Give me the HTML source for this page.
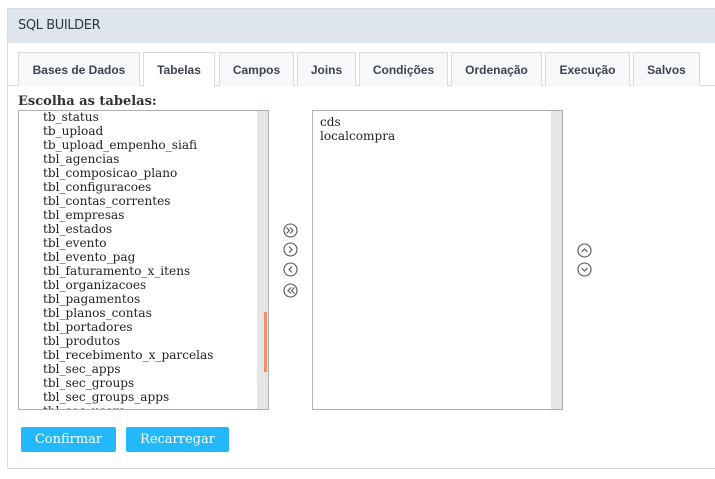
<!DOCTYPE html>
<html><head><meta charset="utf-8"><style>
body{margin:0;width:715px;height:479px;background:#fff;position:relative;overflow:hidden;font-family:"Liberation Sans",sans-serif}
.panel{position:absolute;left:7px;top:8px;width:720px;height:461px;border:1px solid #d5dde3;box-sizing:border-box}
.hdr{position:absolute;left:0;top:0;right:0;height:34px;background:#dfe5ed;font-size:13px;color:#2f3946;line-height:34px;padding-left:10px;font-family:"DejaVu Sans",sans-serif;letter-spacing:-0.4px}
.tabline{position:absolute;left:8px;top:85px;width:720px;border-top:1px solid #d5dde3}
.tab{position:absolute;top:52px;height:34px;box-sizing:border-box;border:1px solid #d5dde3;border-bottom:none;background:#f6f8fa;font-size:12px;font-weight:bold;color:#3d4451;text-align:center;line-height:34px}
.tab.act{background:#fff;height:35px}
.lbl{position:absolute;left:18px;top:94px;font:bold 13px "DejaVu Serif",serif;color:#333}
.list{position:absolute;top:110px;width:251px;height:300px;border:1px solid #a9b0b8;box-sizing:border-box;overflow:hidden;font:12.1px/14px "DejaVu Serif",serif;color:#222}
.sb{position:absolute;right:0;top:0;width:11px;height:100%;background:#e5e5e5}
.btn{position:absolute;top:427px;height:25px;background:#22b8fb;color:#fff;border-radius:2px;font:13px/25px "DejaVu Serif",serif;text-align:center}
</style></head><body>
<div class="panel"><div class="hdr">SQL BUILDER</div></div>
<div class="tabline"></div>
<div class="tab" style="left:18px;width:122px">Bases de Dados</div>
<div class="tab act" style="left:143px;width:72px">Tabelas</div>
<div class="tab" style="left:219px;width:75px">Campos</div>
<div class="tab" style="left:297px;width:59px">Joins</div>
<div class="tab" style="left:359px;width:89px">Condições</div>
<div class="tab" style="left:451px;width:91px">Ordenação</div>
<div class="tab" style="left:545px;width:85px">Execução</div>
<div class="tab" style="left:633px;width:67px">Salvos</div>
<div class="lbl">Escolha as tabelas:</div>
<div class="list" style="left:18px"><div style="padding:0 0 0 24px;margin-top:-1px;white-space:pre">tb_status
tb_upload
tb_upload_empenho_siafi
tbl_agencias
tbl_composicao_plano
tbl_configuracoes
tbl_contas_correntes
tbl_empresas
tbl_estados
tbl_evento
tbl_evento_pag
tbl_faturamento_x_itens
tbl_organizacoes
tbl_pagamentos
tbl_planos_contas
tbl_portadores
tbl_produtos
tbl_recebimento_x_parcelas
tbl_sec_apps
tbl_sec_groups
tbl_sec_groups_apps
tbl_sec_users</div><div class="sb"><div style="position:absolute;left:7px;top:201px;width:3px;height:60px;background:#f0916b"></div></div></div>
<div class="list" style="left:312px"><div style="padding:4px 0 0 7px;white-space:pre">cds
localcompra</div><div class="sb"></div></div>
<svg width="715" height="479" style="position:absolute;left:0;top:0" fill="none" stroke="#555" stroke-width="1.1">
<circle cx="290.5" cy="230.5" r="6.5"/><path d="M286.5 227.5l3 3-3 3M290 227.5l3 3-3 3"/>
<circle cx="290.5" cy="249.5" r="6.5"/><path d="M289 246.5l3 3-3 3"/>
<circle cx="290.5" cy="269.5" r="6.5"/><path d="M292 266.5l-3 3 3 3"/>
<circle cx="290.5" cy="290.5" r="6.5"/><path d="M291 287.5l-3 3 3 3M294.5 287.5l-3 3 3 3"/>
<circle cx="584.5" cy="250.5" r="6.5"/><path d="M581.5 252l3-3 3 3"/>
<circle cx="584.5" cy="269.5" r="6.5"/><path d="M581.5 268l3 3 3-3"/>
</svg>
<div class="btn" style="left:21px;width:95px">Confirmar</div>
<div class="btn" style="left:126px;width:103px">Recarregar</div>
</body></html>
